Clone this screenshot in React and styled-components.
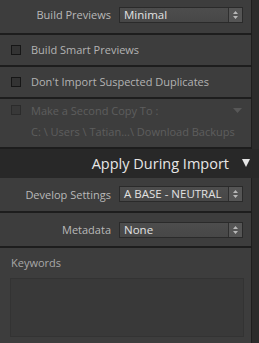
import React from 'react';
import styled, {createGlobalStyle} from 'styled-components';

const GlobalStyle = createGlobalStyle`
  html, body {
    margin: 0;
    padding: 0;
    background: #2a2a2a;
  }
  body {
    font-family: "Open Sans", "Liberation Sans", sans-serif;
  }
`;

const Shell = styled.div`
  width: 259px;
  height: 343px;
  overflow: hidden;
  display: flex;
  flex-direction: column;
  background: #2b2b2b;
`;

const Section = styled.div`
  width: 252px;
  box-sizing: border-box;
  height: ${p => p.h}px;
  background: #3d3d3d;
  border-right: 1px solid #1e1e1e;
  border-bottom: ${p => p.last ? 'none' : '2px solid #1d1d1d'};
  display: flex;
  flex-direction: column;
  justify-content: ${p => p.top ? 'flex-start' : 'center'};
  padding: ${p => p.pad || '0'};
`;

const Row = styled.div`
  display: flex;
  align-items: center;
  gap: 8px;
`;

const Label = styled.span`
  width: 111px;
  flex-shrink: 0;
  text-align: right;
  font-size: 11px;
  color: #b9b9b9;
  white-space: nowrap;
`;

const Select = styled.div`
  width: 124px;
  height: 16px;
  box-sizing: border-box;
  display: flex;
  background: linear-gradient(#4d4d4d, #474747);
  border: 1px solid #2a2a2a;
  color: #e2e2e2;
  font-size: 11.5px;
  line-height: 14px;
`;

const SelectText = styled.span`
  flex: 1;
  padding-left: 4px;
  white-space: nowrap;
  overflow: hidden;
`;

const Spinner = styled.span`
  width: 13px;
  border-left: 1px solid #2e2e2e;
  background: #555;
  display: flex;
  align-items: center;
  justify-content: center;
`;

const Check = styled.span`
  width: 10px;
  height: 10px;
  box-sizing: border-box;
  border: 1px solid #161616;
  background: #333;
  flex-shrink: 0;
  opacity: ${p => p.dim ? 0.45 : 1};
`;

const CheckRow = styled.div`
  display: flex;
  align-items: center;
  gap: 10px;
  padding-left: 11px;
  font-size: 11px;
  color: ${p => p.dim ? '#5e5e5e' : '#b3b3b3'};
`;

const Grow = styled.span`
  flex: 1;
`;

const Caret = styled.svg`
  margin-right: 9px;
`;

const Path = styled.div`
  padding-left: 31px;
  margin-top: 6px;
  font-size: 11px;
  color: #5e5e5e;
  white-space: nowrap;
`;

const Header = styled.div`
  height: 29px;
  flex-shrink: 0;
  background: #282828;
  display: flex;
  align-items: center;
  justify-content: flex-end;
  gap: 13px;
  padding-right: 9px;
  color: #e6e6e6;
  font-size: 14.5px;
`;

const KeywordLabel = styled.div`
  padding-left: 11px;
  font-size: 11px;
  color: #a8a8a8;
`;

const KeywordBox = styled.div`
  margin: 8px 0 0 10px;
  width: 234px;
  height: 59px;
  box-sizing: border-box;
  background: #393939;
  border: 1px solid #333;
`;

function Arrows() {
  return (
    <svg width="7" height="10" viewBox="0 0 7 10">
      <path d="M3.5 1 L6 4 H1 Z M3.5 9 L6 6 H1 Z" fill="#b8b8b8" />
    </svg>
  );
}

function Dropdown({children}) {
  return (
    <Select>
      <SelectText>{children}</SelectText>
      <Spinner><Arrows /></Spinner>
    </Select>
  );
}

export default function App() {
  return (
    <Shell>
      <GlobalStyle />
      <Section h={35} pad="0 0 3px 0">
        <Row>
          <Label>Build Previews</Label>
          <Dropdown>Minimal</Dropdown>
        </Row>
      </Section>
      <Section h={32}>
        <CheckRow><Check />Build Smart Previews</CheckRow>
      </Section>
      <Section h={32}>
        <CheckRow><Check />Don't Import Suspected Duplicates</CheckRow>
      </Section>
      <Section h={50} top pad="4px 0 0 0">
        <CheckRow dim>
          <Check dim />
          <Grow>Make a Second Copy To :</Grow>
          <Caret width="9" height="5" viewBox="0 0 9 5">
            <path d="M0 0 H9 L4.5 5 Z" fill="#575757" />
          </Caret>
        </CheckRow>
        <Path>C: \ Users \ Tatian...\ Download Backups</Path>
      </Section>
      <Header>
        <span>Apply During Import</span>
        <svg width="8" height="8" viewBox="0 0 8 8">
          <path d="M0 0 H8 L4 8 Z" fill="#e6e6e6" />
        </svg>
      </Header>
      <Section h={36}>
        <Row>
          <Label>Develop Settings</Label>
          <Dropdown>A BASE - NEUTRAL</Dropdown>
        </Row>
      </Section>
      <Section h={35}>
        <Row>
          <Label>Metadata</Label>
          <Dropdown>None</Dropdown>
        </Row>
      </Section>
      <Section h={95} top last pad="7px 0 0 0">
        <KeywordLabel>Keywords</KeywordLabel>
        <KeywordBox />
      </Section>
    </Shell>
  );
}
